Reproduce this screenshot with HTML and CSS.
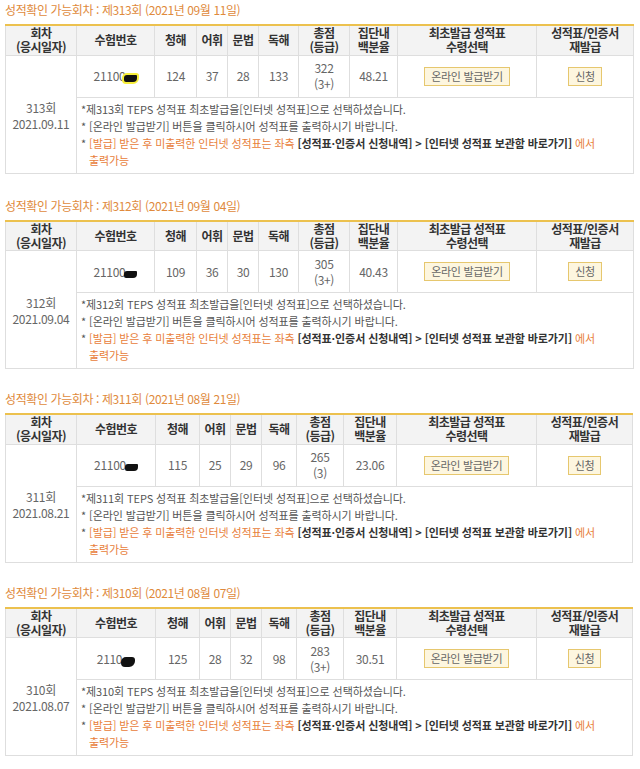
FILE: index.html
```html
<!DOCTYPE html>
<html lang="ko">
<head>
<meta charset="utf-8">
<link rel="stylesheet" href="styles.css">
</head>
<body>
<div class="page">

<section class="round">
  <h3 class="round-title">성적확인 가능회차 : 제313회 (2021년 09월 11일)</h3>
  <table class="score">
    <colgroup><col class="c1"><col class="c2"><col class="c3"><col class="c4"><col class="c5"><col class="c6"><col class="c7"><col class="c8"><col class="c9"><col class="c10"></colgroup>
    <thead>
      <tr><th>회차<br>(응시일자)</th><th>수험번호</th><th>청해</th><th>어휘</th><th>문법</th><th>독해</th><th>총점<br>(등급)</th><th>집단내<br>백분율</th><th>최초발급 성적표<br>수령선택</th><th>성적표/인증서<br>재발급</th></tr>
    </thead>
    <tbody>
      <tr class="data">
        <td rowspan="2" class="round-cell">313회<br>2021.09.11</td>
        <td>21100<span class="mask mask-hl"></span></td><td>124</td><td>37</td><td>28</td><td>133</td><td>322<br>(3+)</td><td>48.21</td>
        <td><span class="btn">온라인 발급받기</span></td><td><span class="btn">신청</span></td>
      </tr>
      <tr class="notes-row">
        <td colspan="9" class="notes">
          <p>*제313회 TEPS 성적표 최초발급을[인터넷 성적표]으로 선택하셨습니다.</p>
          <p>* [온라인 발급받기] 버튼을 클릭하시어 성적표를 출력하시기 바랍니다.</p>
          <p class="warn">* <span class="o">[발급] 받은 후 미출력한 인터넷 성적표는 좌측</span> <b>[성적표·인증서 신청내역] &gt; [인터넷 성적표 보관함 바로가기]</b> <span class="o">에서</span><br><span class="o">출력가능</span></p>
        </td>
      </tr>
    </tbody>
  </table>
</section>

<section class="round">
  <h3 class="round-title">성적확인 가능회차 : 제312회 (2021년 09월 04일)</h3>
  <table class="score">
    <colgroup><col class="c1"><col class="c2"><col class="c3"><col class="c4"><col class="c5"><col class="c6"><col class="c7"><col class="c8"><col class="c9"><col class="c10"></colgroup>
    <thead>
      <tr><th>회차<br>(응시일자)</th><th>수험번호</th><th>청해</th><th>어휘</th><th>문법</th><th>독해</th><th>총점<br>(등급)</th><th>집단내<br>백분율</th><th>최초발급 성적표<br>수령선택</th><th>성적표/인증서<br>재발급</th></tr>
    </thead>
    <tbody>
      <tr class="data">
        <td rowspan="2" class="round-cell">312회<br>2021.09.04</td>
        <td>21100<span class="mask"></span></td><td>109</td><td>36</td><td>30</td><td>130</td><td>305<br>(3+)</td><td>40.43</td>
        <td><span class="btn">온라인 발급받기</span></td><td><span class="btn">신청</span></td>
      </tr>
      <tr class="notes-row">
        <td colspan="9" class="notes">
          <p>*제312회 TEPS 성적표 최초발급을[인터넷 성적표]으로 선택하셨습니다.</p>
          <p>* [온라인 발급받기] 버튼을 클릭하시어 성적표를 출력하시기 바랍니다.</p>
          <p class="warn">* <span class="o">[발급] 받은 후 미출력한 인터넷 성적표는 좌측</span> <b>[성적표·인증서 신청내역] &gt; [인터넷 성적표 보관함 바로가기]</b> <span class="o">에서</span><br><span class="o">출력가능</span></p>
        </td>
      </tr>
    </tbody>
  </table>
</section>

<section class="round">
  <h3 class="round-title">성적확인 가능회차 : 제311회 (2021년 08월 21일)</h3>
  <table class="score alt">
    <colgroup><col class="c1"><col class="c2"><col class="c3"><col class="c4"><col class="c5"><col class="c6"><col class="c7"><col class="c8"><col class="c9"><col class="c10"></colgroup>
    <thead>
      <tr><th>회차<br>(응시일자)</th><th>수험번호</th><th>청해</th><th>어휘</th><th>문법</th><th>독해</th><th>총점<br>(등급)</th><th>집단내<br>백분율</th><th>최초발급 성적표<br>수령선택</th><th>성적표/인증서<br>재발급</th></tr>
    </thead>
    <tbody>
      <tr class="data">
        <td rowspan="2" class="round-cell">311회<br>2021.08.21</td>
        <td>21100<span class="mask"></span></td><td>115</td><td>25</td><td>29</td><td>96</td><td>265<br>(3)</td><td>23.06</td>
        <td><span class="btn">온라인 발급받기</span></td><td><span class="btn">신청</span></td>
      </tr>
      <tr class="notes-row">
        <td colspan="9" class="notes">
          <p>*제311회 TEPS 성적표 최초발급을[인터넷 성적표]으로 선택하셨습니다.</p>
          <p>* [온라인 발급받기] 버튼을 클릭하시어 성적표를 출력하시기 바랍니다.</p>
          <p class="warn">* <span class="o">[발급] 받은 후 미출력한 인터넷 성적표는 좌측</span> <b>[성적표·인증서 신청내역] &gt; [인터넷 성적표 보관함 바로가기]</b> <span class="o">에서</span><br><span class="o">출력가능</span></p>
        </td>
      </tr>
    </tbody>
  </table>
</section>

<section class="round">
  <h3 class="round-title">성적확인 가능회차 : 제310회 (2021년 08월 07일)</h3>
  <table class="score alt">
    <colgroup><col class="c1"><col class="c2"><col class="c3"><col class="c4"><col class="c5"><col class="c6"><col class="c7"><col class="c8"><col class="c9"><col class="c10"></colgroup>
    <thead>
      <tr><th>회차<br>(응시일자)</th><th>수험번호</th><th>청해</th><th>어휘</th><th>문법</th><th>독해</th><th>총점<br>(등급)</th><th>집단내<br>백분율</th><th>최초발급 성적표<br>수령선택</th><th>성적표/인증서<br>재발급</th></tr>
    </thead>
    <tbody>
      <tr class="data">
        <td rowspan="2" class="round-cell">310회<br>2021.08.07</td>
        <td>2110<span class="mask mask-scribble"></span></td><td>125</td><td>28</td><td>32</td><td>98</td><td>283<br>(3+)</td><td>30.51</td>
        <td><span class="btn">온라인 발급받기</span></td><td><span class="btn">신청</span></td>
      </tr>
      <tr class="notes-row">
        <td colspan="9" class="notes">
          <p>*제310회 TEPS 성적표 최초발급을[인터넷 성적표]으로 선택하셨습니다.</p>
          <p>* [온라인 발급받기] 버튼을 클릭하시어 성적표를 출력하시기 바랍니다.</p>
          <p class="warn">* <span class="o">[발급] 받은 후 미출력한 인터넷 성적표는 좌측</span> <b>[성적표·인증서 신청내역] &gt; [인터넷 성적표 보관함 바로가기]</b> <span class="o">에서</span><br><span class="o">출력가능</span></p>
        </td>
      </tr>
    </tbody>
  </table>
</section>

</div>
</body>
</html>
```

FILE: styles.css
```css
* { box-sizing: border-box; }
body {
  margin: 0;
  background: #fff;
  font-family: "Noto Sans CJK KR", "Noto Sans", sans-serif;
  color: #555;
}
.page {
  width: 640px;
  padding: 0 7px 0 5px;
}
.round { margin-bottom: 20px; }
.round:first-child { margin-bottom: 22px; }
.round-title {
  margin: 0;
  height: 24px;
  padding-top: 1px;
  font-size: 12px;
  line-height: 18px;
  font-weight: normal;
  color: #e08a3c;
  letter-spacing: -0.4px;
}
.score {
  width: 628px;
  table-layout: fixed;
  border-collapse: collapse;
  border-top: 2px solid #ecc14e;
  font-size: 12px;
}
.score .c1 { width: 71px; }
.score .c2 { width: 78px; }
.score .c3 { width: 42px; }
.score .c4 { width: 31px; }
.score .c5 { width: 31px; }
.score .c6 { width: 40px; }
.score .c7 { width: 51px; }
.score .c8 { width: 48px; }
.score .c9 { width: 139px; }
.score .c10 { width: 97px; }
.score.alt .c2 { width: 79px; }
.score.alt .c3 { width: 44px; }
.score.alt .c6 { width: 35px; }
.score.alt .c7 { width: 47px; }
.score.alt .c8 { width: 53px; }
.score.alt .c9 { width: 140px; }
.score.alt .c10 { width: 96px; }

.score th, .score td {
  border: 1px solid #dedede;
  text-align: center;
  vertical-align: middle;
  padding: 0;
}
.score tr:first-child th { border-top: 0; }
.score th {
  background: #f3f3f3;
  height: 30px;
  font-size: 12px;
  line-height: 14px;
  font-weight: bold;
  color: #333;
  letter-spacing: -0.5px;
}
.data td {
  height: 42px;
  line-height: 16px;
  color: #666;
  letter-spacing: -0.3px;
}
.round-cell {
  font-size: 12px;
  line-height: 17px;
  color: #555;
  padding-top: 3px !important;
}
.mask {
  display: inline-block;
  width: 13px;
  height: 7px;
  margin-left: -1px;
  background: #111;
  border-radius: 3px 1px 4px 2px;
  vertical-align: -1px;
}
.mask-hl {
  box-shadow: 0 0 0 2px #f7ee3a;
}
.mask-scribble {
  width: 14px;
  height: 10px;
  border-radius: 5px 3px 6px 4px;
  vertical-align: -3px;
}
.btn {
  display: inline-block;
  height: 19px;
  padding: 0 6px;
  background: #fdf6df;
  border: 1px solid #e6c76e;
  font-size: 11px;
  line-height: 17px;
  color: #666;
  letter-spacing: -0.3px;
}
.notes-row td { height: 76px; }
.notes {
  text-align: left !important;
  padding: 3px 4px 4px 4px !important;
  font-size: 11px;
  color: #555;
  letter-spacing: -0.1px;
}
.notes p {
  margin: 0;
  line-height: 17px;
  padding-left: 8px;
  text-indent: -8px;
}
.notes .o { color: #e8803a; }
.notes b { color: #333; font-weight: bold; }
```
